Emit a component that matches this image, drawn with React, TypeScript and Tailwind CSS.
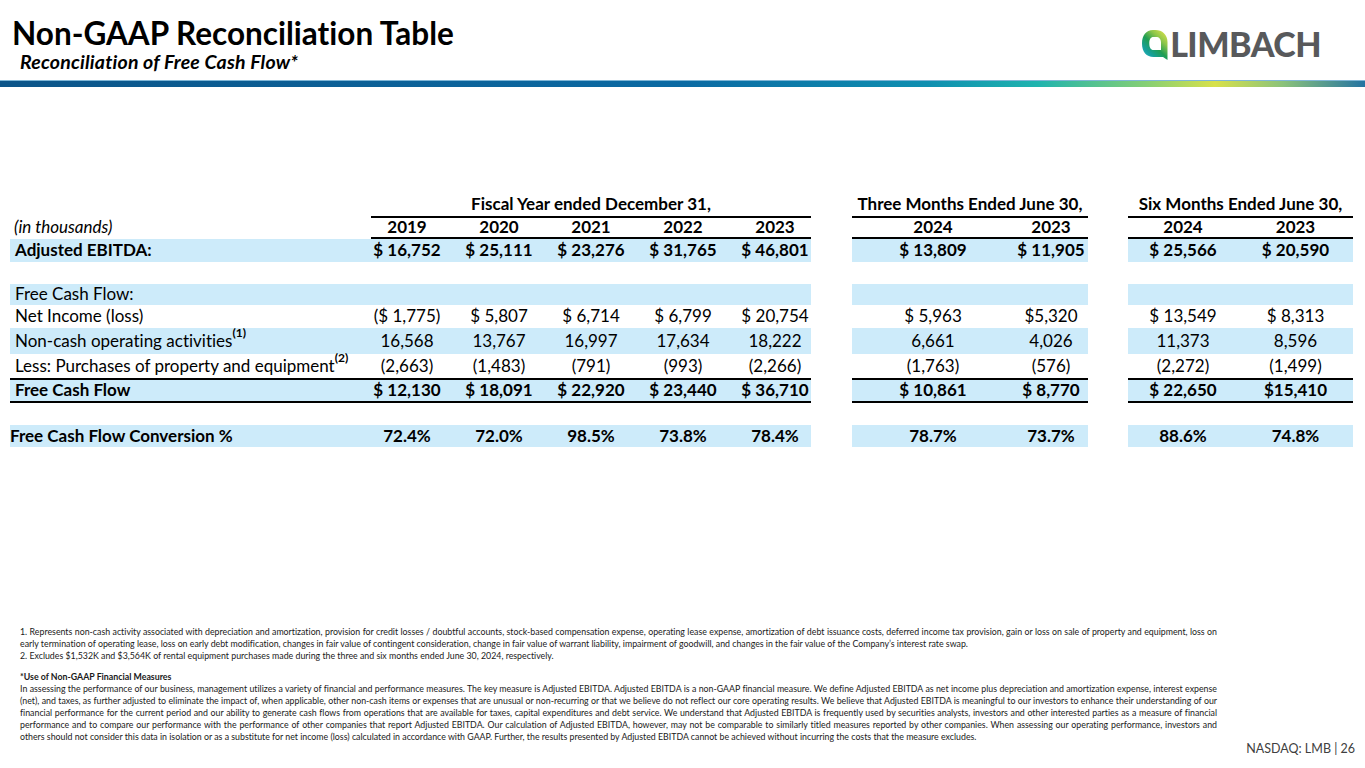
import React from "react";

type Row = {
  label?: React.ReactNode;
  blue?: boolean;
  bold?: boolean;
  indent?: boolean;
  fy?: string[];
  three?: string[];
  six?: string[];
  h: string;
  line?: boolean;
};

const BLUE = "bg-[#cdebfa]";

const rows: Row[] = [
  {
    label: "Adjusted EBITDA:",
    blue: true,
    bold: true,
    indent: true,
    fy: ["$ 16,752", "$ 25,111", "$ 23,276", "$ 31,765", "$ 46,801"],
    three: ["$ 13,809", "$ 11,905"],
    six: ["$ 25,566", "$ 20,590"],
    h: "h-[23px]",
  },
  { h: "h-[22px]" },
  { label: "Free Cash Flow:", blue: true, indent: true, h: "h-[21px]" },
  {
    label: "Net Income (loss)",
    indent: true,
    fy: ["($ 1,775)", "$ 5,807", "$ 6,714", "$ 6,799", "$ 20,754"],
    three: ["$ 5,963", "$5,320"],
    six: ["$ 13,549", "$ 8,313"],
    h: "h-[23px]",
  },
  {
    label: (
      <>
        Non-cash operating activities<sup className="text-[12px] font-bold top-[-0.6em]">(1)</sup>
      </>
    ),
    blue: true,
    indent: true,
    fy: ["16,568", "13,767", "16,997", "17,634", "18,222"],
    three: ["6,661", "4,026"],
    six: ["11,373", "8,596"],
    h: "h-[26px]",
  },
  {
    label: (
      <>
        Less: Purchases of property and equipment<sup className="text-[12px] font-bold top-[-0.6em]">(2)</sup>
      </>
    ),
    indent: true,
    fy: ["(2,663)", "(1,483)", "(791)", "(993)", "(2,266)"],
    three: ["(1,763)", "(576)"],
    six: ["(2,272)", "(1,499)"],
    h: "h-[26px]",
    line: true,
  },
  {
    label: "Free Cash Flow",
    blue: true,
    bold: true,
    indent: true,
    fy: ["$ 12,130", "$ 18,091", "$ 22,920", "$ 23,440", "$ 36,710"],
    three: ["$ 10,861", "$ 8,770"],
    six: ["$ 22,650", "$15,410"],
    h: "h-[23px]",
    line: true,
  },
  { h: "h-[22px]" },
  {
    label: "Free Cash Flow Conversion %",
    blue: true,
    bold: true,
    fy: ["72.4%", "72.0%", "98.5%", "73.8%", "78.4%"],
    three: ["78.7%", "73.7%"],
    six: ["88.6%", "74.8%"],
    h: "h-[22px]",
  },
];

const fyCells = ["w-[82px] pr-[10px]", "w-[92px]", "w-[92px]", "w-[92px]", "w-[82px] pl-[10px]"];
const threeCells = ["w-[162px]", "w-[74px]"];
const sixCells = ["w-[110px]", "w-[115px]"];

function Cells({ widths, values }: { widths: string[]; values?: string[] }) {
  return (
    <>
      {widths.map((w, i) => (
        <div key={i} className={`${w} text-center whitespace-nowrap`}>
          {values ? values[i] : ""}
        </div>
      ))}
    </>
  );
}

function TableRow({ row }: { row: Row }) {
  const bg = row.blue ? BLUE : "";
  const line = row.line ? "border-b-2 border-black" : "";
  return (
    <div className={`flex ${row.h} ${row.bold ? "font-bold" : ""}`}>
      <div className={`w-[361px] flex items-center whitespace-nowrap ${row.indent ? "pl-[5px]" : ""} ${bg} ${line}`}>
        {row.label}
      </div>
      <div className={`w-[440px] flex items-center ${bg} ${line}`}>
        <Cells widths={fyCells} values={row.fy} />
      </div>
      <div className="w-[41px]" />
      <div className={`w-[236px] flex items-center ${bg} ${line}`}>
        <Cells widths={threeCells} values={row.three} />
      </div>
      <div className="w-[40px]" />
      <div className={`w-[225px] flex items-center ${bg} ${line}`}>
        <Cells widths={sixCells} values={row.six} />
      </div>
    </div>
  );
}

function Logo() {
  return (
    <div className="flex items-center gap-[2px]">
      <svg width="27" height="31" viewBox="0 0 27 31">
        <defs>
          <linearGradient id="lg" x1="0.95" y1="0" x2="0.15" y2="1">
            <stop offset="0" stopColor="#e2e44c" />
            <stop offset="0.3" stopColor="#8ec64a" />
            <stop offset="0.55" stopColor="#1f9d52" />
            <stop offset="0.8" stopColor="#15a09e" />
            <stop offset="1" stopColor="#33bcc4" />
          </linearGradient>
        </defs>
        <path
          fillRule="evenodd"
          fill="url(#lg)"
          d="M12 1 C5 1 1 6.5 1 14.5 C1 23 5.5 28 12.5 28 H22 L26.5 31 V13 C26.5 5.5 21 1 14.5 1 Z M12.5 8 C9.5 8 8.3 10.5 8.3 14.5 C8.3 18.5 9.8 21 12.5 21 H20 V13.5 C20 10 18.2 8 15 8 Z"
        />
      </svg>
      <span className="text-[34px] leading-none font-black text-[#58595b] tracking-[-0.5px]">LIMBACH</span>
    </div>
  );
}

const justLine = "text-justify [text-align-last:justify] whitespace-nowrap";

export default function App() {
  return (
    <div className="w-[1365px] h-[768px] overflow-hidden bg-white text-black font-['Lato',sans-serif] [font-variant-ligatures:none] flex flex-col relative">
      {/* Header */}
      <div className="h-[86px] flex justify-between">
        <div className="pl-[12px] pt-[15px]">
          <div className="text-[31.5px] leading-[36px] font-bold">Non-GAAP Reconciliation Table</div>
          <div className="pl-[8px] text-[19.5px] leading-[22px] font-bold italic tracking-[0.2px]">Reconciliation of Free Cash Flow*</div>
        </div>
        <div className="pt-[27px] pr-[44px]">
          <Logo />
        </div>
      </div>
      <div className="h-[7px] bg-[linear-gradient(90deg,#0c5589_0%,#0b6aa3_50%,#0f8fb0_68%,#1fb4ae_76%,#86cf74_84%,#d8e14a_89%,#8bc27a_94%,#2574a2_100%)] border-t border-[#7fb6d6]" />

      {/* Table */}
      <div className="pt-[105px] pl-[10px] text-[17px]">
        <div className="flex h-[24px] font-bold items-center">
          <div className="w-[361px]" />
          <div className="w-[440px] text-center">Fiscal Year ended December 31,</div>
          <div className="w-[41px]" />
          <div className="w-[236px] text-center">Three Months Ended June 30,</div>
          <div className="w-[40px]" />
          <div className="w-[225px] text-center">Six Months Ended June 30,</div>
        </div>
        <div className="flex h-[23px] items-center">
          <div className="w-[361px] pl-[4px] italic self-center">(in thousands)</div>
          <div className="w-[440px] h-full flex items-center font-bold border-y-2 border-black">
            <Cells widths={fyCells} values={["2019", "2020", "2021", "2022", "2023"]} />
          </div>
          <div className="w-[41px]" />
          <div className="w-[236px] h-full flex items-center font-bold border-y-2 border-black">
            <Cells widths={threeCells} values={["2024", "2023"]} />
          </div>
          <div className="w-[40px]" />
          <div className="w-[225px] h-full flex items-center font-bold border-y-2 border-black">
            <Cells widths={sixCells} values={["2024", "2023"]} />
          </div>
        </div>
        {rows.map((r, i) => (
          <TableRow key={i} row={r} />
        ))}
      </div>

      {/* Footnotes */}
      <div className="mt-[179px] pl-[20px] w-[1217px] text-[8.8px] leading-[12px] text-[#1a1a1a]">
        <div className={justLine}>
          1. Represents non-cash activity associated with depreciation and amortization, provision for credit losses / doubtful accounts, stock-based compensation expense, operating lease expense, amortization of debt issuance costs, deferred income tax provision, gain or loss on sale of property and equipment, loss on
        </div>
        <div className="whitespace-nowrap">
          early termination of operating lease, loss on early debt modification, changes in fair value of contingent consideration, change in fair value of warrant liability, impairment of goodwill, and changes in the fair value of the Company’s interest rate swap.
        </div>
        <div className="whitespace-nowrap">
          2. Excludes $1,532K and $3,564K of rental equipment purchases made during the three and six months ended June 30, 2024, respectively.
        </div>
        <div className="h-[9px]" />
        <div className="font-bold">*Use of Non-GAAP Financial Measures</div>
        <div className={justLine}>
          In assessing the performance of our business, management utilizes a variety of financial and performance measures. The key measure is Adjusted EBITDA. Adjusted EBITDA is a non-GAAP financial measure. We define Adjusted EBITDA as net income plus depreciation and amortization expense, interest expense
        </div>
        <div className={justLine}>
          (net), and taxes, as further adjusted to eliminate the impact of, when applicable, other non-cash items or expenses that are unusual or non-recurring or that we believe do not reflect our core operating results. We believe that Adjusted EBITDA is meaningful to our investors to enhance their understanding of our
        </div>
        <div className={justLine}>
          financial performance for the current period and our ability to generate cash flows from operations that are available for taxes, capital expenditures and debt service. We understand that Adjusted EBITDA is frequently used by securities analysts, investors and other interested parties as a measure of financial
        </div>
        <div className={justLine}>
          performance and to compare our performance with the performance of other companies that report Adjusted EBITDA. Our calculation of Adjusted EBITDA, however, may not be comparable to similarly titled measures reported by other companies. When assessing our operating performance, investors and
        </div>
        <div className="whitespace-nowrap">
          others should not consider this data in isolation or as a substitute for net income (loss) calculated in accordance with GAAP. Further, the results presented by Adjusted EBITDA cannot be achieved without incurring the costs that the measure excludes.
        </div>
      </div>

      <div className="mt-auto mb-[13px] pr-[10px] self-end text-[12.5px] leading-none text-[#404040]">NASDAQ: LMB | 26</div>
    </div>
  );
}
